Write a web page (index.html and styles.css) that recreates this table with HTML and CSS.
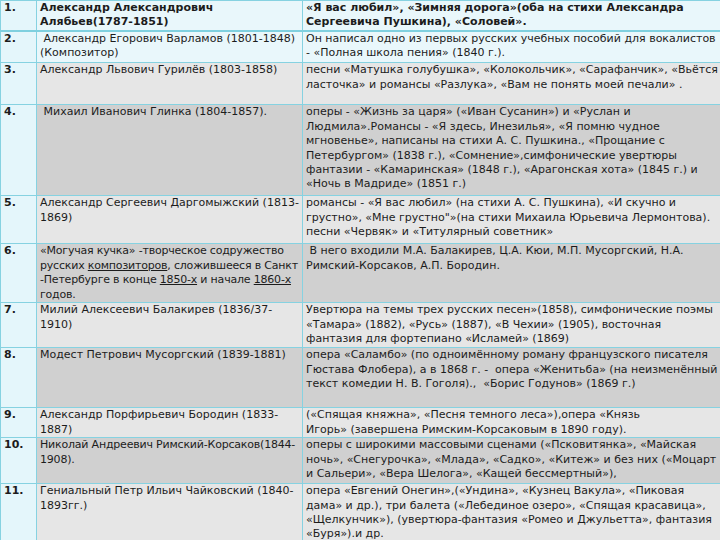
FILE: index.html
```html
<!DOCTYPE html>
<html lang="ru">
<head>
<meta charset="utf-8">
<link rel="stylesheet" href="styles.css">
</head>
<body>
<table class="composers">
  <colgroup>
    <col class="c-num">
    <col class="c-name">
    <col class="c-works">
  </colgroup>
  <tbody>
    <tr class="row blue bold r1">
      <td class="num">1.</td>
      <td>Александр Александрович<br>Алябьев(1787-1851)</td>
      <td>«Я вас любил», «Зимняя дорога»(оба на стихи Александра<br>Сергеевича Пушкина), «Соловей».</td>
    </tr>
    <tr class="row blue r2">
      <td class="num">2.</td>
      <td>&nbsp;Александр Егорович Варламов (1801-1848)<br>(Композитор)</td>
      <td>Он написал одно из первых русских учебных пособий для вокалистов<br>- «Полная школа пения» (1840 г.).</td>
    </tr>
    <tr class="row light r3">
      <td class="num">3.</td>
      <td>Александр Львович Гурилёв (1803-1858)</td>
      <td>песни «Матушка голубушка», «Колокольчик», «Сарафанчик», «Вьётся<br>ласточка» и романсы «Разлука», «Вам не понять моей печали» .</td>
    </tr>
    <tr class="row dark r4">
      <td class="num">4.</td>
      <td>&nbsp;Михаил Иванович Глинка (1804-1857).</td>
      <td>оперы - «Жизнь за царя» («Иван Сусанин») и «Руслан и<br>Людмила».Романсы - «Я здесь, Инезилья», «Я помню чудное<br>мгновенье», написаны на стихи А. С. Пушкина., «Прощание с<br>Петербургом» (1838 г.), «Сомнение»,симфонические увертюры<br>фантазии - «Камаринская» (1848 г.), «Арагонская хота» (1845 г.) и<br>«Ночь в Мадриде» (1851 г.)</td>
    </tr>
    <tr class="row light r5">
      <td class="num">5.</td>
      <td>Александр Сергеевич Даргомыжский (1813-<br>1869)</td>
      <td>романсы - «Я вас любил» (на стихи А. С. Пушкина), «И скучно и<br>грустно», «Мне грустно"»(на стихи Михаила Юрьевича Лермонтова).<br>песни «Червяк» и «Титулярный советник»</td>
    </tr>
    <tr class="row dark r6">
      <td class="num">6.</td>
      <td class="tight">«Могучая кучка» -творческое содружество<br>русских <u>композиторов</u>, сложившееся в Санкт<br>-Петербурге в конце <u>1850-х</u> и начале <u>1860-х</u><br>годов.</td>
      <td>&nbsp;В него входили М.А. Балакирев, Ц.А. Кюи, М.П. Мусоргский, Н.А.<br>Римский-Корсаков, А.П. Бородин.</td>
    </tr>
    <tr class="row light r7">
      <td class="num">7.</td>
      <td>Милий Алексеевич Балакирев (1836/37-<br>1910)</td>
      <td>Увертюра на темы трех русских песен»(1858), симфонические поэмы<br>«Тамара» (1882), «Русь» (1887), «В Чехии» (1905), восточная<br>фантазия для фортепиано «Исламей» (1869)</td>
    </tr>
    <tr class="row dark r8">
      <td class="num">8.</td>
      <td>Модест Петрович Мусоргский (1839-1881)</td>
      <td>опера «Саламбо» (по одноимённому роману французского писателя<br>Гюстава Флобера), а в 1868 г. -&nbsp; опера «Женитьба» (на неизменённый<br>текст комедии Н. В. Гоголя).,&nbsp; «Борис Годунов» (1869 г.)</td>
    </tr>
    <tr class="row light r9">
      <td class="num">9.</td>
      <td>Александр Порфирьевич Бородин (1833-<br>1887)</td>
      <td>(«Спящая княжна», «Песня темного леса»),опера «Князь<br>Игорь» (завершена Римским-Корсаковым в 1890 году).</td>
    </tr>
    <tr class="row dark r10">
      <td class="num">10.</td>
      <td class="tight">Николай&nbsp;Андреевич&nbsp;Римский-Корсаков(1844-<br>1908).</td>
      <td>оперы с широкими массовыми сценами («Псковитянка», «Майская<br>ночь», «Снегурочка», «Млада», «Садко», «Китеж» и без них («Моцарт<br>и Сальери», «Вера Шелога», «Кащей бессмертный»),</td>
    </tr>
    <tr class="row light r11">
      <td class="num">11.</td>
      <td>Гениальный Петр Ильич Чайковский (1840-<br>1893гг.)</td>
      <td>опера «Евгений Онегин»,(«Ундина», «Кузнец Вакула», «Пиковая<br>дама» и др.), три балета («Лебединое озеро», «Спящая красавица»,<br>«Щелкунчик»), (увертюра-фантазия «Ромео и Джульетта», фантазия<br>«Буря»).и др.</td>
    </tr>
  </tbody>
</table>
</body>
</html>
```
FILE: styles.css
```css
html, body {
  margin: 0;
  padding: 0;
  background: #ffffff;
  overflow: hidden;
}

.composers {
  border-collapse: collapse;
  table-layout: fixed;
  width: 724px;
  font-family: "DejaVu Sans", Verdana, sans-serif;
  font-size: 11px;
  line-height: 14.4px;
  color: #1c1c1c;
}

.c-num { width: 36px; }
.c-name { width: 266px; }
.c-works { width: 422px; }

.composers td {
  border: 1px solid #86d2e1;
  padding: 0 1px 0 3px;
  vertical-align: top;
}

.composers td.tight {
  letter-spacing: -0.2px;
  white-space: nowrap;
}

.composers td.num {
  font-weight: bold;
  background: #e4f6fb;
  padding-left: 3px;
}

.blue td { background: #e9f7fb; }
.light td { background: #e6e6e6; }
.dark td { background: #d0d0d0; }

.bold td { font-weight: bold; }
.r1 td { border-bottom: 2px solid #7fd0df; }

.r1 { height: 27px; }
.r2 { height: 32px; }
.r3 { height: 42px; }
.r4 { height: 91px; }
.r5 { height: 48px; }
.r6 { height: 59px; }
.r7 { height: 45px; }
.r8 { height: 60px; }
.r9 { height: 29px; }
.r10 { height: 46px; }
.r11 { height: 62px; }

u { text-decoration: underline; }
```
